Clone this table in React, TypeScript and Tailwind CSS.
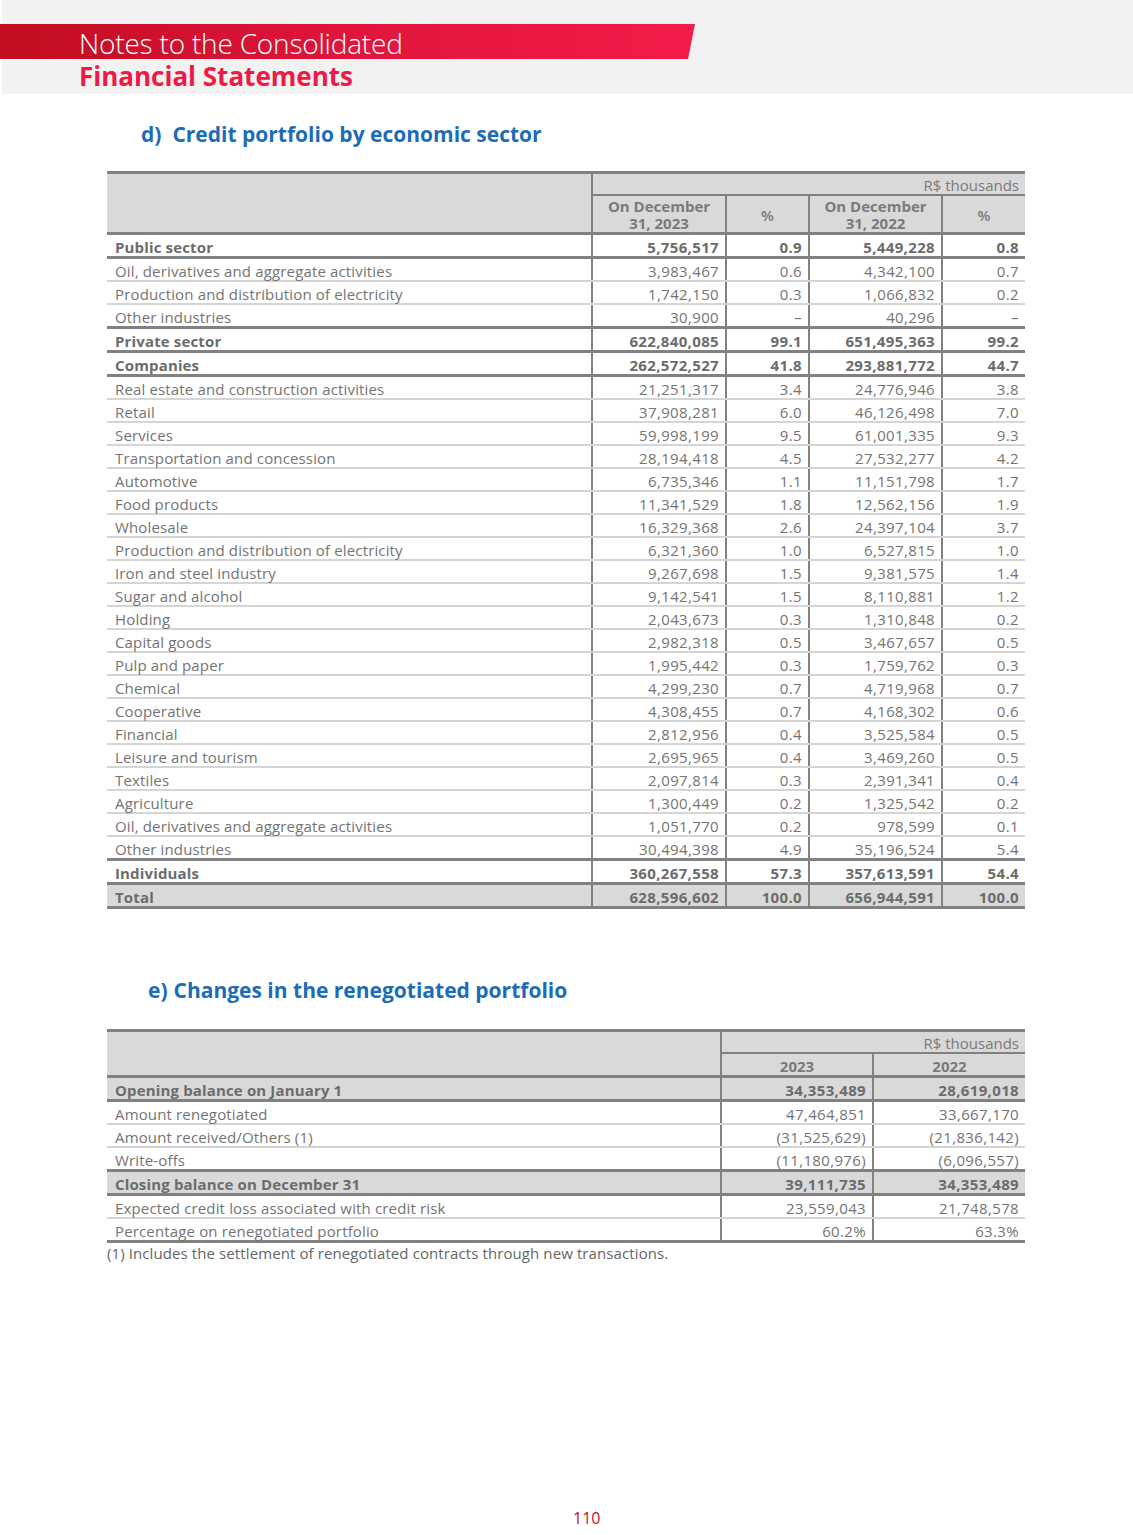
import React from "react";

type R = {
  l: string;
  v: string[];
  bold?: boolean;
  thick?: boolean;
  gray?: boolean;
};

const rows1: R[] = [
  { l: "Public sector", v: ["5,756,517", "0.9", "5,449,228", "0.8"], bold: true, thick: true },
  { l: "Oil, derivatives and aggregate activities", v: ["3,983,467", "0.6", "4,342,100", "0.7"] },
  { l: "Production and distribution of electricity", v: ["1,742,150", "0.3", "1,066,832", "0.2"] },
  { l: "Other industries", v: ["30,900", "–", "40,296", "–"], thick: true },
  { l: "Private sector", v: ["622,840,085", "99.1", "651,495,363", "99.2"], bold: true, thick: true },
  { l: "Companies", v: ["262,572,527", "41.8", "293,881,772", "44.7"], bold: true, thick: true },
  { l: "Real estate and construction activities", v: ["21,251,317", "3.4", "24,776,946", "3.8"] },
  { l: "Retail", v: ["37,908,281", "6.0", "46,126,498", "7.0"] },
  { l: "Services", v: ["59,998,199", "9.5", "61,001,335", "9.3"] },
  { l: "Transportation and concession", v: ["28,194,418", "4.5", "27,532,277", "4.2"] },
  { l: "Automotive", v: ["6,735,346", "1.1", "11,151,798", "1.7"] },
  { l: "Food products", v: ["11,341,529", "1.8", "12,562,156", "1.9"] },
  { l: "Wholesale", v: ["16,329,368", "2.6", "24,397,104", "3.7"] },
  { l: "Production and distribution of electricity", v: ["6,321,360", "1.0", "6,527,815", "1.0"] },
  { l: "Iron and steel industry", v: ["9,267,698", "1.5", "9,381,575", "1.4"] },
  { l: "Sugar and alcohol", v: ["9,142,541", "1.5", "8,110,881", "1.2"] },
  { l: "Holding", v: ["2,043,673", "0.3", "1,310,848", "0.2"] },
  { l: "Capital goods", v: ["2,982,318", "0.5", "3,467,657", "0.5"] },
  { l: "Pulp and paper", v: ["1,995,442", "0.3", "1,759,762", "0.3"] },
  { l: "Chemical", v: ["4,299,230", "0.7", "4,719,968", "0.7"] },
  { l: "Cooperative", v: ["4,308,455", "0.7", "4,168,302", "0.6"] },
  { l: "Financial", v: ["2,812,956", "0.4", "3,525,584", "0.5"] },
  { l: "Leisure and tourism", v: ["2,695,965", "0.4", "3,469,260", "0.5"] },
  { l: "Textiles", v: ["2,097,814", "0.3", "2,391,341", "0.4"] },
  { l: "Agriculture", v: ["1,300,449", "0.2", "1,325,542", "0.2"] },
  { l: "Oil, derivatives and aggregate activities", v: ["1,051,770", "0.2", "978,599", "0.1"] },
  { l: "Other industries", v: ["30,494,398", "4.9", "35,196,524", "5.4"], thick: true },
  { l: "Individuals", v: ["360,267,558", "57.3", "357,613,591", "54.4"], bold: true, thick: true },
  { l: "Total", v: ["628,596,602", "100.0", "656,944,591", "100.0"], bold: true, thick: true, gray: true },
];

const rows2: R[] = [
  { l: "Opening balance on January 1", v: ["34,353,489", "28,619,018"], bold: true, thick: true, gray: true },
  { l: "Amount renegotiated", v: ["47,464,851", "33,667,170"] },
  { l: "Amount received/Others (1)", v: ["(31,525,629)", "(21,836,142)"] },
  { l: "Write-offs", v: ["(11,180,976)", "(6,096,557)"], thick: true },
  { l: "Closing balance on December 31", v: ["39,111,735", "34,353,489"], bold: true, thick: true, gray: true },
  { l: "Expected credit loss associated with credit risk", v: ["23,559,043", "21,748,578"] },
  { l: "Percentage on renegotiated portfolio", v: ["60.2%", "63.3%"], thick: true },
];

function rowCls(r: R) {
  const b = r.thick
    ? "h-[24px] border-b-[3px] border-[#818181]"
    : "h-[23px] border-b-2 border-[#d5d5d5]";
  const bg = r.gray ? "bg-[#d9d9d9]" : "bg-white";
  const t = r.bold ? "font-bold text-[#6c6c6c]" : "font-normal text-[#747474]";
  return `${b} ${bg} ${t}`;
}

function Row1({ r }: { r: R }) {
  return (
    <div className={`grid grid-cols-[484px_134px_83px_133px_84px] ${rowCls(r)}`}>
      <div className="flex items-center pl-[8px] pt-[3px] leading-none tracking-[0.15px]">{r.l}</div>
      {r.v.map((c, i) => (
        <div
          key={i}
          className="flex items-center justify-end border-l-2 border-[#818181] pr-[6px] pt-[3px] leading-none tracking-[0.35px]"
        >
          {c}
        </div>
      ))}
    </div>
  );
}

function Row2({ r }: { r: R }) {
  return (
    <div className={`grid grid-cols-[613px_152px_153px] ${rowCls(r)}`}>
      <div className="flex items-center pl-[8px] pt-[3px] leading-none tracking-[0.15px]">{r.l}</div>
      {r.v.map((c, i) => (
        <div
          key={i}
          className="flex items-center justify-end border-l-2 border-[#818181] pr-[6px] pt-[3px] leading-none tracking-[0.35px]"
        >
          {c}
        </div>
      ))}
    </div>
  );
}

export default function App() {
  return (
    <div className="w-[1133px] min-h-[1535px] bg-white font-['Open_Sans',sans-serif] text-[15px]">
      {/* Header band */}
      <div className="ml-[2px] h-[94px] bg-[#f2f2f2] pt-[24px]">
        <div className="-ml-[2px] flex h-[35px] w-[695px] items-center bg-gradient-to-r from-[#c10d1f] via-[#e0153c] to-[#f31b49] [clip-path:polygon(0_0,100%_0,calc(100%-7px)_100%,0_100%)]">
          <span className="ml-[79px] pt-[2px] text-[28px] font-light leading-none tracking-[-0.2px] text-white">
            Notes to the Consolidated
          </span>
        </div>
        <div className="ml-[77px] flex h-[34px] items-center text-[26px] font-bold leading-none text-[#ee1a45]">
          Financial Statements
        </div>
      </div>

      {/* Section d */}
      <div className="ml-[141px] mt-[27px] flex h-[28px] items-center text-[21px] font-bold text-[#1c6cb6]">
        <span>d)</span>
        <span className="ml-[11px]">Credit portfolio by economic sector</span>
      </div>

      <div className="ml-[107px] mt-[22px] w-[918px]">
        <div className="grid grid-cols-[484px_434px] border-t-[3px] border-b-[3px] border-[#818181] bg-[#d9d9d9] text-[#7a7a7a]">
          <div />
          <div className="flex flex-col border-l-2 border-[#818181]">
            <div className="flex h-[22px] items-center justify-end border-b-2 border-[#818181] pr-[6px] pt-[3px] leading-none">
              R$ thousands
            </div>
            <div className="grid h-[36px] grid-cols-[132px_83px_133px_84px]">
              <div className="flex items-center justify-center pt-[2px] text-center font-bold leading-[17px]">
                On December
                <br />
                31, 2023
              </div>
              <div className="flex items-center justify-center border-l-2 border-[#818181] pt-[2px] font-semibold">%</div>
              <div className="flex items-center justify-center border-l-2 border-[#818181] pt-[2px] text-center font-bold leading-[17px]">
                On December
                <br />
                31, 2022
              </div>
              <div className="flex items-center justify-center border-l-2 border-[#818181] pt-[2px] font-semibold">%</div>
            </div>
          </div>
        </div>
        {rows1.map((r, i) => (
          <Row1 key={i} r={r} />
        ))}
      </div>

      {/* Section e */}
      <div className="ml-[148px] mt-[68px] flex h-[28px] items-center text-[21px] font-bold text-[#1c6cb6]">
        <span>e)</span>
        <span className="ml-[6px]">Changes in the renegotiated portfolio</span>
      </div>

      <div className="ml-[107px] mt-[24px] w-[918px]">
        <div className="grid grid-cols-[613px_305px] border-t-[3px] border-b-[3px] border-[#818181] bg-[#d9d9d9] text-[#7a7a7a]">
          <div />
          <div className="flex flex-col border-l-2 border-[#818181]">
            <div className="flex h-[22px] items-center justify-end border-b-2 border-[#818181] pr-[6px] pt-[3px] leading-none">
              R$ thousands
            </div>
            <div className="grid h-[21px] grid-cols-[150px_153px]">
              <div className="flex items-center justify-center pt-[3px] font-bold leading-none">2023</div>
              <div className="flex items-center justify-center border-l-2 border-[#818181] pt-[3px] font-bold leading-none">
                2022
              </div>
            </div>
          </div>
        </div>
        {rows2.map((r, i) => (
          <Row2 key={i} r={r} />
        ))}
        <div className="h-[19px] pt-[1px] leading-[19px] tracking-[0.1px] text-[#666666]">
          (1) Includes the settlement of renegotiated contracts through new transactions.
        </div>
      </div>

      <div className="mt-[244px] h-[24px] pl-[573px] text-[16px] leading-[24px] text-[#c8102e]">110</div>
    </div>
  );
}
